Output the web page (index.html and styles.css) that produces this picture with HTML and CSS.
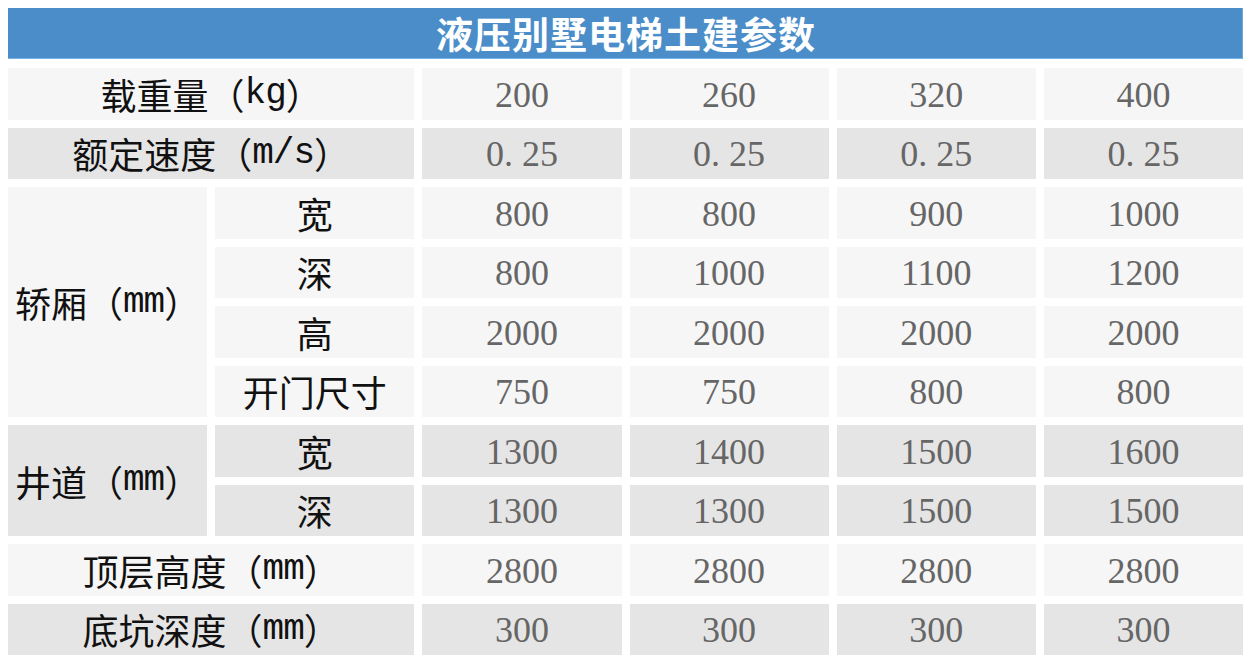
FILE: index.html
```html
<!DOCTYPE html>
<html lang="zh-CN">
<head>
<meta charset="utf-8">
<title>液压别墅电梯土建参数</title>
<link rel="stylesheet" href="styles.css">
</head>
<body>
<div class="sheet">
  <div class="title">液压别墅电梯土建参数</div>
  <div class="grid">
    <div class="c lbl light span2">载重量（<span class="lat">kg</span>）</div>
    <div class="c num light">200</div>
    <div class="c num light">260</div>
    <div class="c num light">320</div>
    <div class="c num light">400</div>

    <div class="c lbl dark span2">额定速度（<span class="lat">m/s</span>）</div>
    <div class="c num dark">0<span class="dot">.</span>25</div>
    <div class="c num dark">0<span class="dot">.</span>25</div>
    <div class="c num dark">0<span class="dot">.</span>25</div>
    <div class="c num dark">0<span class="dot">.</span>25</div>

    <div class="c lbl light rows4">轿厢（<span class="lat">mm</span>）</div>
    <div class="c lbl light">宽</div>
    <div class="c num light">800</div>
    <div class="c num light">800</div>
    <div class="c num light">900</div>
    <div class="c num light">1000</div>

    <div class="c lbl light">深</div>
    <div class="c num light">800</div>
    <div class="c num light">1000</div>
    <div class="c num light">1100</div>
    <div class="c num light">1200</div>

    <div class="c lbl light">高</div>
    <div class="c num light">2000</div>
    <div class="c num light">2000</div>
    <div class="c num light">2000</div>
    <div class="c num light">2000</div>

    <div class="c lbl light">开门尺寸</div>
    <div class="c num light">750</div>
    <div class="c num light">750</div>
    <div class="c num light">800</div>
    <div class="c num light">800</div>

    <div class="c lbl dark rows2">井道（<span class="lat">mm</span>）</div>
    <div class="c lbl dark">宽</div>
    <div class="c num dark">1300</div>
    <div class="c num dark">1400</div>
    <div class="c num dark">1500</div>
    <div class="c num dark">1600</div>

    <div class="c lbl dark">深</div>
    <div class="c num dark">1300</div>
    <div class="c num dark">1300</div>
    <div class="c num dark">1500</div>
    <div class="c num dark">1500</div>

    <div class="c lbl light span2">顶层高度（<span class="lat">mm</span>）</div>
    <div class="c num light">2800</div>
    <div class="c num light">2800</div>
    <div class="c num light">2800</div>
    <div class="c num light">2800</div>

    <div class="c lbl dark span2">底坑深度（<span class="lat">mm</span>）</div>
    <div class="c num dark">300</div>
    <div class="c num dark">300</div>
    <div class="c num dark">300</div>
    <div class="c num dark">300</div>
  </div>
</div>
</body>
</html>
```

FILE: styles.css
```css
html, body {
  margin: 0;
  padding: 0;
  background: #ffffff;
}
body {
  padding: 8px;
}
.sheet {
  width: 1235px;
  display: flex;
  flex-direction: column;
  gap: 9px;
}
.title {
  height: 51px;
  box-sizing: border-box;
  background: #4a8dc9;
  border-bottom: 1px solid #72b2e6;
  border-right: 1px solid #6aa8de;
  color: #ffffff;
  font-family: "Noto Sans CJK SC", sans-serif;
  font-weight: 700;
  font-size: 37px;
  line-height: 50px;
  text-align: center;
  letter-spacing: 1px;
  padding-left: 2px;
}
.grid {
  display: grid;
  grid-template-columns: repeat(6, 1fr);
  grid-auto-rows: 51.5px;
  column-gap: 8px;
  row-gap: 8px;
}
.c {
  display: flex;
  align-items: center;
  justify-content: center;
  white-space: nowrap;
  font-size: 36px;
  overflow: visible;
}
.light { background: #f6f6f6; }
.dark { background: #e5e5e5; }
.lbl {
  font-family: "Noto Sans CJK SC", sans-serif;
  font-weight: 400;
  color: #111111;
}
.lat {
  font-family: "Liberation Mono", monospace;
  letter-spacing: -1px;
}
.num {
  font-family: "Liberation Serif", serif;
  color: #666666;
  padding-top: 2px;
}
.dot {
  letter-spacing: 0.25em;
}
.span2 { grid-column: span 2; }
.rows4 { grid-row: span 4; }
.rows2 { grid-row: span 2; }
```
